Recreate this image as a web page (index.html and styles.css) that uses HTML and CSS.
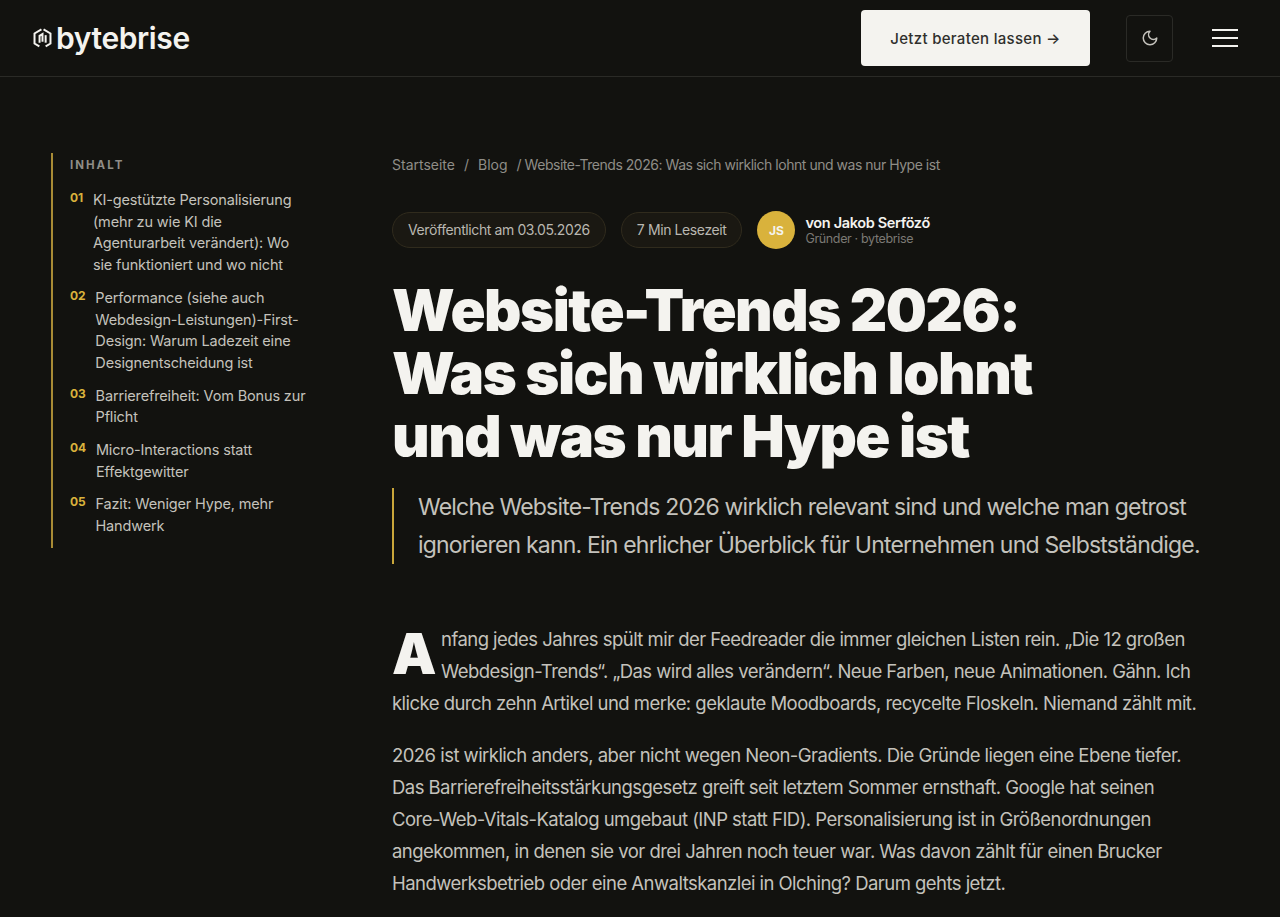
FILE: index.html
```html
<!DOCTYPE html>
<html lang="de">
<head>
    <meta charset="UTF-8">
    <meta name="viewport" content="width=device-width, initial-scale=1.0">
    <title>Website-Trends 2026 | bytebrise</title>
    <link rel="stylesheet" href="styles.css">
</head>
<body>

    <!-- Navbar -->
    <header class="navbar">
        <a class="logo" href="#">
            <svg class="logo-icon" viewBox="0 0 18 20" fill="none" stroke="currentColor" stroke-width="1.9">
                <path d="M8 1.4 1.4 5.2v9.6L6 17.5"/>
                <path d="M10 1.4l6.6 3.8v9.6L12 17.5"/>
                <path d="M6.2 14V7.4L9 5.8V13"/>
                <path d="M12 14V6.8"/>
            </svg>
            <span>bytebrise</span>
        </a>
        <div class="nav-actions">
            <a class="cta" href="#">Jetzt beraten lassen →</a>
            <button class="theme-btn" aria-label="Theme">
                <svg viewBox="0 0 24 24" fill="none" stroke="currentColor" stroke-width="2" stroke-linecap="round" stroke-linejoin="round">
                    <path d="M12 3a6 6 0 0 0 9 9 9 9 0 1 1-9-9Z"/>
                </svg>
            </button>
            <button class="burger" aria-label="Menü"><i></i><i></i><i></i></button>
        </div>
    </header>

    <div class="layout">
        <!-- Inhaltsverzeichnis -->
        <aside class="toc">
            <div class="toc-title">INHALT</div>
            <ol class="toc-list">
                <li><span class="toc-num">01</span><a href="#">KI-gestützte Personalisierung (mehr zu wie KI die Agenturarbeit verändert): Wo sie funktioniert und wo nicht</a></li>
                <li><span class="toc-num">02</span><a href="#">Performance (siehe auch Webdesign-Leistungen)-First-Design: Warum Ladezeit eine Designentscheidung ist</a></li>
                <li><span class="toc-num">03</span><a href="#">Barrierefreiheit: Vom Bonus zur Pflicht</a></li>
                <li><span class="toc-num">04</span><a href="#">Micro-Interactions statt Effektgewitter</a></li>
                <li><span class="toc-num">05</span><a href="#">Fazit: Weniger Hype, mehr Handwerk</a></li>
            </ol>
        </aside>

        <main class="article">
            <nav class="breadcrumb">
                <a href="#">Startseite</a>
                <span class="sep">/</span>
                <a href="#">Blog</a>
                <span class="current">/ Website-Trends 2026: Was sich wirklich lohnt und was nur Hype ist</span>
            </nav>

            <div class="meta">
                <span class="pill">Veröffentlicht am 03.05.2026</span>
                <span class="pill">7 Min Lesezeit</span>
                <div class="author">
                    <div class="avatar">JS</div>
                    <div>
                        <div class="author-name">von Jakob Serföző</div>
                        <div class="author-role">Gründer · bytebrise</div>
                    </div>
                </div>
            </div>

            <h1>Website-Trends 2026:<br>Was sich wirklich lohnt<br>und was nur Hype ist</h1>

            <p class="lead">Welche Website-Trends 2026 wirklich relevant sind und welche man getrost ignorieren kann. Ein ehrlicher Überblick für Unternehmen und Selbstständige.</p>

            <p class="intro"><span class="dropcap">A</span>nfang jedes Jahres spült mir der Feedreader die immer gleichen Listen rein. „Die 12 großen Webdesign-Trends“. „Das wird alles verändern“. Neue Farben, neue Animationen. Gähn. Ich klicke durch zehn Artikel und merke: geklaute Moodboards, recycelte Floskeln. Niemand zählt mit.</p>

            <p>2026 ist wirklich anders, aber nicht wegen Neon-Gradients. Die Gründe liegen eine Ebene tiefer. Das Barrierefreiheitsstärkungsgesetz greift seit letztem Sommer ernsthaft. Google hat seinen Core-Web-Vitals-Katalog umgebaut (INP statt FID). Personalisierung ist in Größenordnungen angekommen, in denen sie vor drei Jahren noch teuer war. Was davon zählt für einen Brucker Handwerksbetrieb oder eine Anwaltskanzlei in Olching? Darum gehts jetzt.</p>
        </main>
    </div>

</body>
</html>
```

FILE: styles.css
```css
:root {
    --bg-color: #12120f;
    --line-color: #2a2a26;
    --white-color: #f4f3ef;
    --text-color: #c4c2bc;
    --muted-color: #8f8d87;
    --gold-color: #d9b23c;
}

* {
    margin: 0;
    padding: 0;
    box-sizing: border-box;
}

body {
    font-family: Inter, "Noto Sans", sans-serif;
    background-color: var(--bg-color);
    color: var(--text-color);
    overflow: hidden;
}

a {
    color: inherit;
    text-decoration: none;
}

/* Navbar */
.navbar {
    height: 77px;
    display: flex;
    align-items: center;
    justify-content: space-between;
    padding: 0 42px 0 33px;
    border-bottom: 1px solid var(--line-color);
}

.logo {
    display: flex;
    align-items: center;
    gap: 4px;
    color: var(--white-color);
    font-size: 30px;
    font-weight: 600;
    letter-spacing: -0.4px;
}

.logo-icon {
    width: 19px;
    height: 21px;
}

.nav-actions {
    display: flex;
    align-items: center;
}

.cta {
    width: 229px;
    height: 56px;
    display: flex;
    align-items: center;
    justify-content: center;
    background: var(--white-color);
    color: #2f2f2c;
    border-radius: 4px;
    font-size: 15px;
    font-weight: 500;
    letter-spacing: 0.3px;
}

.theme-btn {
    width: 47px;
    height: 47px;
    margin-left: 36px;
    display: flex;
    align-items: center;
    justify-content: center;
    background: none;
    border: 1px solid var(--line-color);
    border-radius: 4px;
    color: var(--text-color);
}

.theme-btn svg {
    width: 18px;
    height: 18px;
}

.burger {
    width: 26px;
    margin-left: 39px;
    display: flex;
    flex-direction: column;
    gap: 6px;
    background: none;
    border: none;
}

.burger i {
    height: 2px;
    background: var(--white-color);
}

/* Layout */
.layout {
    display: flex;
    align-items: flex-start;
    padding: 76px 0 0 51px;
}

/* Inhaltsverzeichnis */
.toc {
    width: 258px;
    margin-right: 83px;
    padding: 5px 0 11px 17px;
    border-left: 2px solid #a88b35;
}

.toc-title {
    font-size: 11.5px;
    font-weight: 700;
    letter-spacing: 2px;
    color: var(--muted-color);
    margin-bottom: 17px;
}

.toc-list {
    list-style: none;
    display: flex;
    flex-direction: column;
    gap: 11px;
}

.toc-list li {
    display: flex;
    gap: 10px;
    font-size: 14.5px;
    line-height: 21.7px;
    letter-spacing: -0.15px;
}

.toc-num {
    color: var(--gold-color);
    font-size: 12px;
    font-weight: 700;
    line-height: 18px;
}

/* Artikel */
.article {
    width: 815px;
}

.breadcrumb {
    height: 22px;
    display: flex;
    align-items: center;
    font-size: 14px;
    color: var(--muted-color);
}

.sep {
    margin: 0 9px;
}

.current {
    margin-left: 9px;
    letter-spacing: -0.47px;
}

.meta {
    display: flex;
    align-items: center;
    margin-top: 36px;
}

.pill {
    height: 36px;
    display: flex;
    align-items: center;
    padding: 0 15px 2px;
    margin-right: 15px;
    font-size: 14px;
    letter-spacing: -0.4px;
    color: #b9b7b0;
    background: #1a1812;
    border: 1px solid #302b1d;
    border-radius: 18px;
}

.author {
    display: flex;
    align-items: center;
    gap: 10px;
}

.avatar {
    width: 38px;
    height: 38px;
    display: flex;
    align-items: center;
    justify-content: center;
    border-radius: 50%;
    background: var(--gold-color);
    color: var(--white-color);
    font-size: 12px;
    font-weight: 700;
}

.author-name {
    font-size: 14.5px;
    font-weight: 600;
    letter-spacing: -0.35px;
    color: var(--white-color);
}

.author-role {
    font-size: 12.5px;
    letter-spacing: -0.35px;
    color: #7b7974;
}

h1 {
    margin-top: 30px;
    font-size: 58px;
    font-weight: 900;
    line-height: 63px;
    letter-spacing: -1.5px;
    color: var(--white-color);
}

.lead {
    margin-top: 20px;
    padding-left: 24px;
    border-left: 2px solid #c9a63a;
    font-size: 23px;
    line-height: 38px;
    letter-spacing: -0.8px;
}

.article p:not(.lead) {
    width: 808px;
    font-size: 18.5px;
    line-height: 32px;
    letter-spacing: -0.54px;
    color: var(--text-color);
}

.intro {
    margin-top: 59px;
}

.intro + p {
    margin-top: 20px;
}

.dropcap {
    float: left;
    width: 49px;
    font-size: 56px;
    font-weight: 900;
    line-height: 54px;
    letter-spacing: 0;
    margin-top: 4px;
    color: var(--white-color);
}
```
